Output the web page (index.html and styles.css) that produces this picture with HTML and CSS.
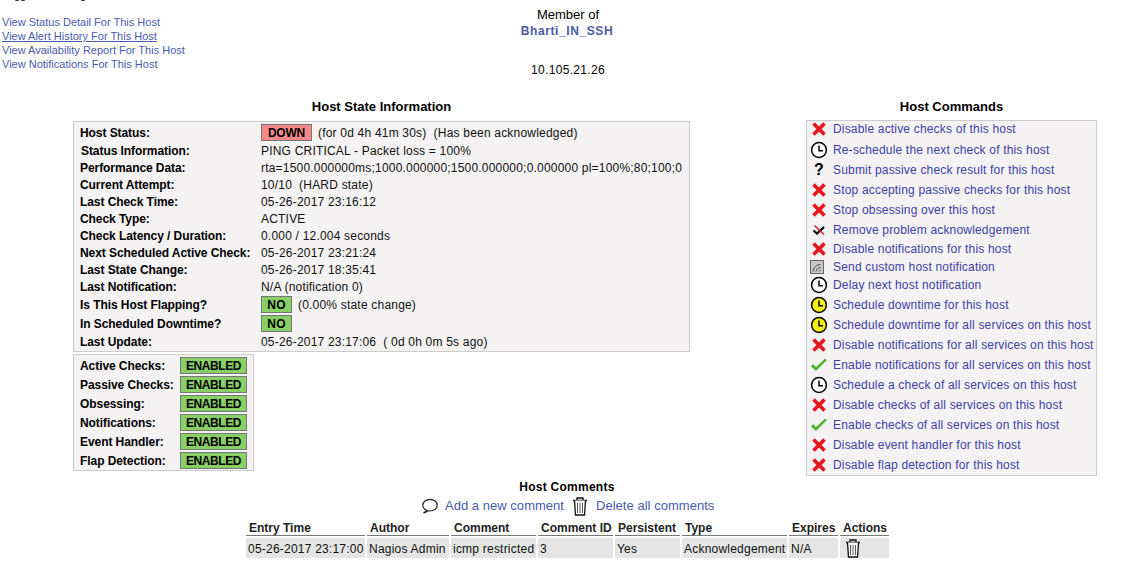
FILE: index.html
```html
<!DOCTYPE html>
<html lang="en">
<head>
<meta charset="utf-8">
<title>Host Information</title>
<link rel="stylesheet" href="styles.css">
</head>
<body>
<svg class="defs" width="0" height="0" aria-hidden="true">
  <symbol id="i-x" viewBox="0 0 18 18"><path d="M3.5 3.5 14.5 14.5M14.5 3.5 3.5 14.5" stroke="#e8141c" stroke-width="3.6" fill="none"/></symbol>
  <symbol id="i-clock" viewBox="0 0 18 18"><circle cx="9" cy="9" r="7.4" fill="#fff" stroke="#000" stroke-width="1.5"/><path d="M9 4.5V9.7H13" stroke="#000" stroke-width="1.5" fill="none"/></symbol>
  <symbol id="i-yclock" viewBox="0 0 18 18"><circle cx="9" cy="9" r="7.4" fill="#f2ee10" stroke="#000" stroke-width="1.5"/><path d="M9 4.5V9.7H13" stroke="#000" stroke-width="1.5" fill="none"/></symbol>
  <symbol id="i-check" viewBox="0 0 18 18"><path d="M1.5 10.5 6 14.5 16.5 4 15 3 6 11.500 3 8.500Z" fill="#4cb81f" stroke="#3c9a18" stroke-width=".6"/></symbol>
  <symbol id="i-ack" viewBox="0 0 18 18"><path d="M3.5 9.5 7 12.5 14 6" stroke="#000" stroke-width="2.2" fill="none"/><path d="M4.5 4.5 14 13.5" stroke="#d8202a" stroke-width="1.6" fill="none"/></symbol>
  <symbol id="i-notify" viewBox="0 0 18 18"><rect x="0.5" y="2.5" width="13" height="13" fill="#c8c8c8" stroke="#666"/><path d="M3 13.5C3.500 9.500 6 7 10.500 6.500M6 13.500C6.300 11.500 7.800 10 10.500 9.500M9 13.500 10.500 12" stroke="#444" fill="none"/></symbol>
  <symbol id="i-bubble" viewBox="0 0 18 18"><path d="M5.500 13.200C3 12 1.800 10.300 1.800 8.300 1.800 5 5 2.300 9 2.300S16.200 5 16.200 8.300 13 14 9 14C8.200 14 7.500 14 6.800 13.700 5.800 15 4.500 15.700 2.500 15.800 4 15 5 14.300 5.500 13.200Z" fill="none" stroke="#222" stroke-width="1.200"/></symbol>
  <symbol id="i-trash" viewBox="0 0 18 20"><path d="M2 4.500H16M6 4V2H12V4" fill="none" stroke="#111" stroke-width="1.300"/><path d="M3.500 4.500 4.500 19H13.500L14.500 4.500" fill="#fff" stroke="#111" stroke-width="1.300"/><path d="M6.500 7V17M9 7V17M11.500 7V17" stroke="#555" stroke-width="1"/></symbol>
</svg>

<div class="page">
  <header class="top">
    <div class="top-left">
      <div class="logged">Logged in as nagiosadmin</div>
      <nav class="host-links">
        <a href="#">View Status Detail For This Host</a>
        <a href="#" class="hover">View Alert History For This Host</a>
        <a href="#">View Availability Report For This Host</a>
        <a href="#">View Notifications For This Host</a>
      </nav>
    </div>
    <div class="top-center">
      <div class="line">Member of</div>
      <a href="#" class="group">Bharti_IN_SSH</a>
      <div class="ip">10.105.21.26</div>
    </div>
  </header>

  <main class="columns">
    <section class="state-col">
      <h2 class="title big">Host State Information</h2>
      <div class="state-box">
        <div class="s-row r18"><span class="lab">Host Status:</span><span class="val"><span class="badge bad down">DOWN</span><span class="after">(for 0d 4h 41m 30s)&nbsp; (Has been acknowledged)</span></span></div>
        <div class="s-row r18"><span class="lab shift">Status Information:</span><span class="val">PING CRITICAL - Packet loss = 100%</span></div>
        <div class="s-row r17"><span class="lab">Performance Data:</span><span class="val">rta=1500.000000ms;1000.000000;1500.000000;0.000000 pl=100%;80;100;0</span></div>
        <div class="s-row r17"><span class="lab">Current Attempt:</span><span class="val">10/10&nbsp; (HARD state)</span></div>
        <div class="s-row r17"><span class="lab">Last Check Time:</span><span class="val">05-26-2017 23:16:12</span></div>
        <div class="s-row r17"><span class="lab">Check Type:</span><span class="val">ACTIVE</span></div>
        <div class="s-row r17"><span class="lab">Check Latency / Duration:</span><span class="val">0.000 / 12.004 seconds</span></div>
        <div class="s-row r17"><span class="lab">Next Scheduled Active Check:</span><span class="val">05-26-2017 23:21:24</span></div>
        <div class="s-row r17"><span class="lab">Last State Change:</span><span class="val">05-26-2017 18:35:41</span></div>
        <div class="s-row r17"><span class="lab">Last Notification:</span><span class="val">N/A (notification 0)</span></div>
        <div class="s-row r19"><span class="lab">Is This Host Flapping?</span><span class="val"><span class="badge ok no">NO</span><span class="after">(0.00% state change)</span></span></div>
        <div class="s-row r18"><span class="lab">In Scheduled Downtime?</span><span class="val"><span class="badge ok no">NO</span></span></div>
        <div class="s-row r18"><span class="lab">Last Update:</span><span class="val">05-26-2017 23:17:06&nbsp; ( 0d 0h 0m 5s ago)</span></div>
      </div>
      <div class="checks-box">
        <div class="c-row"><span class="lab">Active Checks:</span><span class="badge ok en">ENABLED</span></div>
        <div class="c-row"><span class="lab">Passive Checks:</span><span class="badge ok en">ENABLED</span></div>
        <div class="c-row"><span class="lab">Obsessing:</span><span class="badge ok en">ENABLED</span></div>
        <div class="c-row"><span class="lab">Notifications:</span><span class="badge ok en">ENABLED</span></div>
        <div class="c-row"><span class="lab">Event Handler:</span><span class="badge ok en">ENABLED</span></div>
        <div class="c-row"><span class="lab">Flap Detection:</span><span class="badge ok en">ENABLED</span></div>
      </div>
    </section>

    <section class="cmd-col">
      <h2 class="title big">Host Commands</h2>
      <div class="cmd-box">
        <a href="#" class="cmd first"><svg class="ic"><use href="#i-x"/></svg>Disable active checks of this host</a>
        <a href="#" class="cmd"><svg class="ic"><use href="#i-clock"/></svg>Re-schedule the next check of this host</a>
        <a href="#" class="cmd"><span class="ic q">?</span>Submit passive check result for this host</a>
        <a href="#" class="cmd"><svg class="ic"><use href="#i-x"/></svg>Stop accepting passive checks for this host</a>
        <a href="#" class="cmd"><svg class="ic"><use href="#i-x"/></svg>Stop obsessing over this host</a>
        <a href="#" class="cmd"><svg class="ic"><use href="#i-ack"/></svg>Remove problem acknowledgement</a>
        <a href="#" class="cmd h18"><svg class="ic"><use href="#i-x"/></svg>Disable notifications for this host</a>
        <a href="#" class="cmd h18"><svg class="ic"><use href="#i-notify"/></svg>Send custom host notification</a>
        <a href="#" class="cmd h18 gap"><svg class="ic"><use href="#i-clock"/></svg>Delay next host notification</a>
        <a href="#" class="cmd"><svg class="ic"><use href="#i-yclock"/></svg>Schedule downtime for this host</a>
        <a href="#" class="cmd"><svg class="ic"><use href="#i-yclock"/></svg>Schedule downtime for all services on this host</a>
        <a href="#" class="cmd"><svg class="ic"><use href="#i-x"/></svg>Disable notifications for all services on this host</a>
        <a href="#" class="cmd"><svg class="ic"><use href="#i-check"/></svg>Enable notifications for all services on this host</a>
        <a href="#" class="cmd"><svg class="ic"><use href="#i-clock"/></svg>Schedule a check of all services on this host</a>
        <a href="#" class="cmd"><svg class="ic"><use href="#i-x"/></svg>Disable checks of all services on this host</a>
        <a href="#" class="cmd"><svg class="ic"><use href="#i-check"/></svg>Enable checks of all services on this host</a>
        <a href="#" class="cmd"><svg class="ic"><use href="#i-x"/></svg>Disable event handler for this host</a>
        <a href="#" class="cmd"><svg class="ic"><use href="#i-x"/></svg>Disable flap detection for this host</a>
      </div>
    </section>
  </main>

  <section class="comments">
    <h2 class="title wide">Host Comments</h2>
    <div class="comment-actions">
      <svg class="ca-ic"><use href="#i-bubble"/></svg><a href="#">Add a new comment</a>
      <svg class="ca-ic trash"><use href="#i-trash"/></svg><a href="#">Delete all comments</a>
    </div>
    <table class="ctable">
      <colgroup>
        <col class="c1"><col class="c2"><col class="c3"><col class="c4"><col class="c5"><col class="c6"><col class="c7"><col class="c8">
      </colgroup>
      <thead>
        <tr><th>Entry Time</th><th>Author</th><th>Comment</th><th>Comment ID</th><th>Persistent</th><th>Type</th><th>Expires</th><th>Actions</th></tr>
      </thead>
      <tbody>
        <tr><td>05-26-2017 23:17:00</td><td>Nagios Admin</td><td>icmp restricted</td><td>3</td><td>Yes</td><td>Acknowledgement</td><td>N/A</td><td class="act"><svg class="ca-ic row-trash"><use href="#i-trash"/></svg></td></tr>
      </tbody>
    </table>
  </section>
</div>
</body>
</html>
```
FILE: styles.css
```css
* { box-sizing: border-box; }
html, body { margin: 0; padding: 0; background: #fff; }
body { font: 12px/14px "Liberation Sans", Arial, sans-serif; color: #000; overflow: hidden; height: 569px; }
a { color: #3f4fa8; text-decoration: none; }
.defs { position: absolute; }

.page { margin-top: -12px; width: 1128px; }

.top { display: flex; height: 110px; }
.top-left { width: 478px; }
.logged { font-size: 11px; padding-left: 2px; height: 14px; }
.host-links { display: flex; flex-direction: column; padding: 13px 0 0 2px; font-size: 11px; }
.host-links a { height: 14px; line-height: 14px; color: #4a5ab0; }
.host-links a.hover { text-decoration: underline; }
.top-center { width: 180px; text-align: center; padding-top: 20px; }
.line { height: 14px; font-size: 13px; }
.group { display: block; margin-top: 2px; height: 14px; font-weight: bold; color: #4a5aa8; letter-spacing: .6px; padding-right: 2px; }
.ip { margin-top: 25px; height: 14px; letter-spacing: .33px; }

.columns { display: flex; align-items: flex-start; padding-left: 73px; height: 378px; }
.title { margin: 0; height: 16px; font-size: 12px; line-height: 18px; font-weight: bold; text-align: center; letter-spacing: .1px; }
.title.big { font-size: 13px; letter-spacing: 0; }
.title.wide { letter-spacing: .25px; padding-left: 6px; }
.state-col { width: 617px; }
.state-col .title { margin-bottom: 7px; }
.cmd-col { width: 291px; margin-left: 116px; }
.cmd-col .title { margin-bottom: 6px; }

.state-box, .checks-box, .cmd-box { background: #f4f2f2; border: 1px solid #ccc; }
.state-box { padding: 1px 0 1px 6px; height: 231px; }
.s-row { display: flex; align-items: center; }
.r17 { height: 17px; } .r18 { height: 18px; padding-top: 2px; } .r19 { height: 19px; }
.lab { font-weight: bold; white-space: nowrap; letter-spacing: -.07px; }
.s-row .lab { width: 181px; }
.lab.shift { padding-left: 1px; }
.val { white-space: nowrap; display: flex; align-items: center; letter-spacing: .2px; color: #111; }
.after { margin-left: 6px; }

.badge { display: block; height: 17px; line-height: 17px; border: 1px solid #777; font-weight: bold; text-align: center; color: #000; }
.r18 .badge { margin-top: -2px; }
.bad { background: #f88888; letter-spacing: -.2px; }
.ok { background: #88d066; }
.down { width: 51px; }
.no { width: 31px; }
.en { width: 67px; letter-spacing: -.4px; }

.checks-box { width: 181px; height: 117px; margin-top: 2px; padding: 1px 0 0 6px; }
.c-row { display: flex; align-items: center; height: 19px; }
.c-row .lab { width: 100px; }

.cmd-box { height: 356px; padding-left: 3px; }
.cmd { display: flex; align-items: center; height: 20px; white-space: nowrap; color: #4040a8; letter-spacing: .18px; }
.cmd.first { height: 16px; margin-bottom: 3px; }
.h18 { height: 18px; }
.gap { margin-bottom: 1px; }
.ic { width: 18px; height: 18px; flex: none; margin-right: 5px; }
.q { font-size: 16px; line-height: 18px; font-weight: bold; text-align: center; color: #000; letter-spacing: 0; }

.comments { padding-top: 2px; }
.comment-actions { display: flex; align-items: center; height: 20px; margin-top: 2px; padding-left: 421px; font-size: 13px; line-height: 22px; }
.comment-actions a { color: #4a5ab0; letter-spacing: .03px; }
.ca-ic { width: 18px; height: 18px; flex: none; margin-right: 6px; }
.ca-ic.trash { height: 20px; margin-left: 7px; margin-right: 7px; }
.ctable { margin: 1px 0 0 244px; width: 647px; table-layout: fixed; border-collapse: separate; border-spacing: 2px; }
.c1 { width: 119px; } .c2 { width: 82px; } .c3 { width: 85px; } .c4 { width: 75px; }
.c5 { width: 65px; } .c6 { width: 105px; } .c7 { width: 49px; } .c8 { width: 49px; }
.ctable th { text-align: left; font-weight: bold; height: 16px; padding: 2px 0 0 3px; border-bottom: 1px solid #777; color: #222; line-height: 14px; white-space: nowrap; }
.ctable td { background: #e5e5e5; height: 20px; padding: 1px 0 0 2px; white-space: nowrap; overflow: hidden; color: #111; letter-spacing: .22px; }
.ctable td.act { padding-top: 0; }
.row-trash { display: block; height: 20px; margin-left: 2px; }
```
